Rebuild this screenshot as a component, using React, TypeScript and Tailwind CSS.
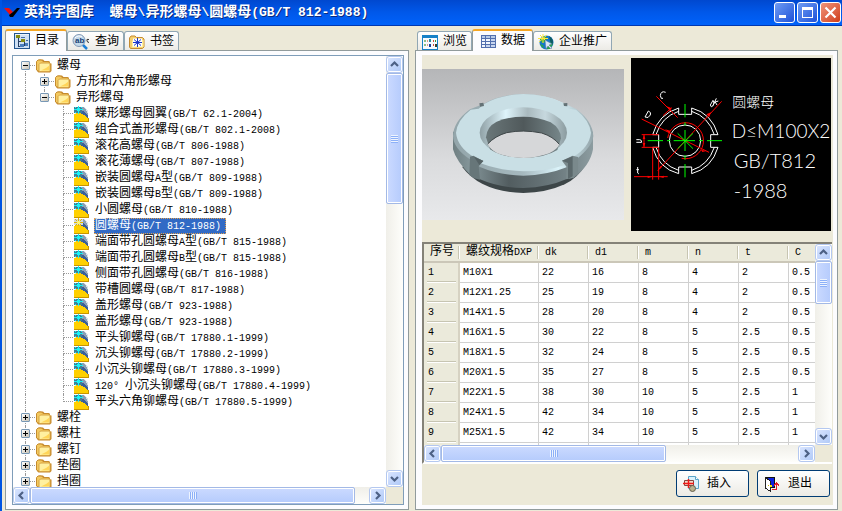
import React from 'react';

type TreeNode = {
  label: string;
  level: number;
  expanded?: boolean;
  first?: boolean;
  last?: boolean;
  selected?: boolean;
};

const standards = [
  '蝶形螺母圆翼(GB/T 62.1-2004)',
  '组合式盖形螺母(GB/T 802.1-2008)',
  '滚花高螺母(GB/T 806-1988)',
  '滚花薄螺母(GB/T 807-1988)',
  '嵌装圆螺母A型(GB/T 809-1988)',
  '嵌装圆螺母B型(GB/T 809-1988)',
  '小圆螺母(GB/T 810-1988)',
  '圆螺母(GB/T 812-1988)',
  '端面带孔圆螺母A型(GB/T 815-1988)',
  '端面带孔圆螺母B型(GB/T 815-1988)',
  '侧面带孔圆螺母(GB/T 816-1988)',
  '带槽圆螺母(GB/T 817-1988)',
  '盖形螺母(GB/T 923-1988)',
  '盖形螺母(GB/T 923-1988)',
  '平头铆螺母(GB/T 17880.1-1999)',
  '沉头铆螺母(GB/T 17880.2-1999)',
  '小沉头铆螺母(GB/T 17880.3-1999)',
  '120° 小沉头铆螺母(GB/T 17880.4-1999)',
  '平头六角铆螺母(GB/T 17880.5-1999)',
];

const nodes: TreeNode[] = [
  { label: '螺母', level: 0, expanded: true, first: true },
  { label: '方形和六角形螺母', level: 1, expanded: false },
  { label: '异形螺母', level: 1, expanded: true, last: true },
  ...standards.map((label, i) => ({
    label,
    level: 2,
    last: i === standards.length - 1,
    selected: i === 7,
  })),
  { label: '螺栓', level: 0, expanded: false },
  { label: '螺柱', level: 0, expanded: false },
  { label: '螺钉', level: 0, expanded: false },
  { label: '垫圈', level: 0, expanded: false },
  { label: '挡圈', level: 0, expanded: false },
];

const columns = ['序号', '螺纹规格DXP', 'dk', 'd1', 'm', 'n', 't', 'C'];

const rows = [
  ['1', 'M10X1', '22', '16', '8', '4', '2', '0.5'],
  ['2', 'M12X1.25', '25', '19', '8', '4', '2', '0.5'],
  ['3', 'M14X1.5', '28', '20', '8', '4', '2', '0.5'],
  ['4', 'M16X1.5', '30', '22', '8', '5', '2.5', '0.5'],
  ['5', 'M18X1.5', '32', '24', '8', '5', '2.5', '0.5'],
  ['6', 'M20X1.5', '35', '27', '8', '5', '2.5', '0.5'],
  ['7', 'M22X1.5', '38', '30', '10', '5', '2.5', '1'],
  ['8', 'M24X1.5', '42', '34', '10', '5', '2.5', '1'],
  ['9', 'M25X1.5', '42', '34', '10', '5', '2.5', '1'],
];

// Latin runs are set smaller so that they take half the width of a Chinese character
const Mixed: React.FC<{ text: string; latin?: string }> = ({ text, latin = 'text-[10px]' }) => (
  <>
    {text.split(/([\x20-\x7e°]+)/).map((part, i) =>
      i % 2 ? (
        <span key={i} className={latin}>
          {part}
        </span>
      ) : (
        part
      )
    )}
  </>
);

const FolderIcon = () => (
  <svg viewBox="0 0 16 14" className="w-4 h-[14px] shrink-0">
    <path d="M1.5 3V2L3 .5h4L8.500 2H13l1 1v1.500h1.500V12L14 13.500H2.500L1 12z" fill="#c98a2b" />
    <path d="M.5 11V2.500L2 1h3.500L7 2.500h5.500L13.500 4v8H2z" fill="#f3c95f" stroke="#c58b2f" />
    <path d="M3 12V5.500L4.500 4H14v7.500L13 12.500H3z" fill="#fff0a0" stroke="#d5a244" />
    <path d="M5 11.500h8l.5-5L10 9z" fill="#ffd558" />
  </svg>
);

const PartIcon: React.FC<{ active?: boolean }> = ({ active }) => (
  <svg viewBox="0 0 15 16" className="w-[15px] h-4 mr-px shrink-0" shapeRendering="crispEdges">
    <path d="M1 1h9l4 4v10H1z" fill="#dbe3ea" />
    <path d="M5 1h4l3 3 2 4v4L5 6z" fill="#8b9fb5" />
    <path d="M5 4l5 1 4 5v3L4 8z" fill="#3a5f9a" />
    <path d="M0 8l3-1h3l4 2 4 4v2H0z" fill="#ffd000" />
    <path d="M0 15h15v1H0zM14 12h1v3h-1z" fill="#c99500" />
    {active ? (
      <>
        <path d="M0 1h9v6H0z" fill="#cfd8e2" />
        <path d="M4 0h1v3H4zM4 5h1v3H4zM0 4h3v1H0zM6 4h3v1H6zM1 1h1v1H1zM2 2h1v1H2zM7 1h1v1H7zM6 2h1v1H6zM1 7h1v1H1zM2 6h1v1H2zM6 6h1v1H6z" fill="#e0b800" />
        <path d="M3 3h3v3H3z" fill="#fff36b" />
      </>
    ) : (
      <>
        <path d="M0 1h8v6H0z" fill="#3f7f98" />
        <path d="M4 0h1v8H4zM0 3h9v1H0zM3 2h3v3H3zM1 1h1v1H1zM7 1h1v1H7zM1 6h1v1H1z" fill="#18f3f5" />
      </>
    )}
  </svg>
);

const Guide: React.FC<{ up?: boolean; down?: boolean; branch?: boolean; expanded?: boolean }> = ({
  up,
  down,
  branch,
  expanded,
}) => (
  <span className="relative w-[19px] h-4 pl-[9px] shrink-0">
    <span
      className={`block h-2 border-dotted border-[#9a9a9a] ${up ? 'border-l' : ''} ${branch ? 'border-b' : ''}`}
    />
    <span className={`block h-2 border-dotted border-[#9a9a9a] ${down ? 'border-l' : ''}`} />
    {expanded !== undefined && (
      <button
        aria-label={expanded ? '折叠' : '展开'}
        className="absolute left-[5px] top-[3px] w-[9px] h-[9px] rounded-[1px] border border-[#7898b5] bg-linear-to-br from-white to-[#c9c3b4]"
      >
        <svg viewBox="0 0 7 7" className="block w-[7px] h-[7px]" shapeRendering="crispEdges">
          <path d={expanded ? 'M1 3h5v1H1z' : 'M1 3h5v1H1zM3 1h1v5H3z'} fill="#000" />
        </svg>
      </button>
    )}
  </span>
);

const TreeRow: React.FC<{ node: TreeNode }> = ({ node }) => (
  <li className="flex h-4 items-center whitespace-nowrap pl-[3px]">
    {node.level === 0 && <Guide up={!node.first} down branch expanded={node.expanded} />}
    {node.level > 0 && <Guide up down />}
    {node.level === 1 && <Guide up down={!node.last} branch expanded={node.expanded} />}
    {node.level === 2 && (
      <>
        <Guide />
        <Guide up down={!node.last} branch />
      </>
    )}
    <span className="flex items-center gap-1 pl-px">
      {node.level === 2 ? <PartIcon active={node.selected} /> : <FolderIcon />}
      <span
        className={
          node.selected
            ? 'h-4 leading-[14px] border border-dotted border-[#e0a050] bg-[#316ac5] text-white pr-1'
            : 'h-4 leading-4 pl-px'
        }
      >
        <Mixed text={node.label} />
      </span>
    </span>
  </li>
);

const arrows = {
  up: 'M1 6l3.500-3.500L8 6',
  down: 'M1 3l3.500 3.500L8 3',
  left: 'M6 1L2.500 4.500 6 8',
  right: 'M3 1l3.500 3.500L3 8',
};

const ArrowButton: React.FC<{ dir: keyof typeof arrows; label: string }> = ({ dir, label }) => (
  <button
    aria-label={label}
    className="w-[17px] h-[17px] shrink-0 flex items-center justify-center rounded-[3px] border border-[#b4c8f0] bg-linear-to-br from-[#dbe6ff] to-[#aec8f7] shadow-[inset_0_0_0_1px_#ffffff]"
  >
    <svg viewBox="0 0 9 9" className="w-[9px] h-[9px]">
      <path d={arrows[dir]} fill="none" stroke="#4d6185" strokeWidth="2.200" />
    </svg>
  </button>
);

const ScrollBar: React.FC<{ vertical?: boolean; size: number }> = ({ vertical, size }) =>
  vertical ? (
    <div className="flex flex-col w-[17px] min-h-0 bg-linear-to-r from-[#f0efe9] to-[#fefefb]">
      <ArrowButton dir="up" label="向上滚动" />
      <div className="flex-1 min-h-0">
        <div
          style={{ height: `${size}%` }}
          className="flex flex-col items-center justify-center gap-px rounded-[2px] border border-[#a3b9e6] bg-linear-to-r from-[#cbdaff] to-[#b5cbfc] shadow-[inset_0_0_0_1px_#ffffff]"
        >
          {[0, 1, 2, 3].map((i) => (
            <i key={i} className="w-[7px] h-px bg-[#eef4fe] shadow-[0_1px_0_#8cb0f8]" />
          ))}
        </div>
      </div>
      <ArrowButton dir="down" label="向下滚动" />
    </div>
  ) : (
    <div className="flex h-[17px] min-w-0 bg-linear-to-b from-[#f0efe9] to-[#fefefb]">
      <ArrowButton dir="left" label="向左滚动" />
      <div className="flex-1 min-w-0 flex">
        <div
          style={{ width: `${size}%` }}
          className="flex items-center justify-center gap-px rounded-[2px] border border-[#a3b9e6] bg-linear-to-b from-[#cbdaff] to-[#b5cbfc] shadow-[inset_0_0_0_1px_#ffffff]"
        >
          {[0, 1, 2, 3].map((i) => (
            <i key={i} className="h-[7px] w-px bg-[#eef4fe] shadow-[1px_0_0_#8cb0f8]" />
          ))}
        </div>
      </div>
      <ArrowButton dir="right" label="向右滚动" />
    </div>
  );

const Tab: React.FC<{ active?: boolean; icon: React.ReactNode; label: string }> = ({ active, icon, label }) => (
  <button
    role="tab"
    aria-selected={!!active}
    className={
      active
        ? 'relative -mb-px h-[22px] flex items-center gap-[5px] pl-2 pr-[7px] rounded-t-[3px] border border-b-0 border-[#919b9c] border-t-2 border-t-[#f5a623] bg-[#fcfcfe] whitespace-nowrap'
        : 'h-[19px] flex items-center gap-[5px] pt-[2px] pl-1 pr-1 rounded-t-[3px] border border-b-0 border-[#91a7b4] bg-linear-to-b from-white to-[#ecebe6] whitespace-nowrap'
    }
  >
    {icon}
    {label}
  </button>
);

const CatalogIcon = () => (
  <svg viewBox="0 0 16 16" className="w-4 h-4" shapeRendering="crispEdges">
    <path d="M0 0h16v16H0z" fill="#24558e" />
    <path d="M1 1h14v14H1z" fill="#cfe0f4" />
    <path d="M1 1h14v1H1z" fill="#edf4fb" />
    <path d="M4 5v8h3M4 8h6v4h2" fill="none" stroke="#263f66" />
    <path d="M2 2h4v3H2zM7 6h4v3H7z" fill="#868c13" />
    <path d="M6 11h4v3H6zM11 10h3v3h-3z" fill="#4a7dbd" />
    <path d="M7 4h4v1H7zM12 7h2v1h-2z" fill="#456da6" />
  </svg>
);

const SearchIcon = () => (
  <svg viewBox="0 0 18 16" className="w-[18px] h-4">
    <path d="M10 10l5 5" stroke="#1b7fd8" strokeWidth="2.500" />
    <circle cx="7" cy="6.500" r="6" fill="#c4d9ea" stroke="#8199b5" />
    <path d="M3 4a5 5 0 0 1 7-1" stroke="#fff" fill="none" />
    <text x="3" y="9" fontSize="8" fontWeight="bold" fontFamily="Liberation Sans, sans-serif" fill="#173e73">
      ab
    </text>
    <path d="M17 5.500q-3-1-2 1.500t2 1" stroke="#333" fill="none" />
  </svg>
);

const BookmarkIcon = () => (
  <svg viewBox="0 0 16 14" className="w-4 h-[14px]">
    <path d="M.5 12V3L2 1h4l1.500 1.500h6L15 4v8l-1.500 1.500h-12z" fill="#f6cf6b" stroke="#c58b2f" />
    <path d="M3 12.500V6l1-1h10.500v7z" fill="#fff0a0" />
    <path d="M4 3.500h9v8H4z" fill="#fff" />
    <path d="M8.500 3v9M4 7.500h9M5 4.500l7 6M12 4.500l-7 6" stroke="#1a35c8" />
  </svg>
);

const BrowseIcon = () => (
  <svg viewBox="0 0 16 15" className="w-4 h-[15px]" shapeRendering="crispEdges">
    <path d="M0 0h16v15H0z" fill="#1581c8" />
    <path d="M1 3h14v11H1z" fill="#f7fbff" />
    <path d="M2 5h2v2H2zM2 9h2v2H2z" fill="#8bbf87" />
    <path d="M5 5h1v2H5zM5 9h1v2H5z" fill="#d99a87" />
    <path d="M7 4h2v3H7z" fill="#2a8a9a" />
    <path d="M7 9h2v3H7z" fill="#1d3f9a" />
    <path d="M11 5h1v2h-1zM11 9h1v2h-1z" fill="#d04a37" />
    <path d="M13 5h1v2h-1z" fill="#2f9a3c" />
    <path d="M13 9h2v3h-2z" fill="#3b3f2c" />
  </svg>
);

const DataIcon = () => (
  <svg viewBox="0 0 15 13" className="w-[15px] h-[13px]" shapeRendering="crispEdges">
    <path d="M0 0h15v13H0z" fill="#526fae" />
    <path d="M1 1h3v2H1zM5 1h4v2H5zM10 1h4v2h-4z" fill="#b7cbe7" />
    <path d="M1 4h3v2H1zM5 4h4v2H5zM1 7h3v2H1zM5 7h4v2H5zM1 10h3v2H1z" fill="#f2f7ff" />
    <path d="M10 4h4v2h-4zM10 7h4v2h-4zM5 10h4v2H5zM10 10h4v2h-4z" fill="#c7d5ee" />
  </svg>
);

const GlobeIcon = () => (
  <svg viewBox="0 0 16 16" className="w-4 h-4">
    <circle cx="8.500" cy="8.500" r="7" fill="#1676ca" />
    <path d="M2 5l4-3 3 2-2 4-3 1zM9 9l4-1 2 2-3 5H9zM2 10l3 1 1 3-2-1z" fill="#29a64a" />
    <path d="M11 2q6 4 3 9l-2-4z" fill="#0e5b62" />
    <path d="M5 0v9M0 4.500h10M2 1l7 7M9 1L1 8" stroke="#ffe83b" />
    <path d="M7 6l1 9 2-3 3 3 1-1-3-3 3-1z" fill="#dbe7f5" stroke="#5875a0" strokeWidth=".5" />
  </svg>
);

const InsertIcon = () => (
  <svg viewBox="0 0 16 16" className="w-4 h-4">
    <path d="M5.500.5h7l3 3v9h-10z" fill="#d9f1fc" stroke="#58a3c8" />
    <path d="M12.500.5v3h3" fill="#fff" stroke="#58a3c8" />
    <path d="M1.500 4.500h9v5h-9z" fill="#f3d9c7" stroke="#86453d" />
    <circle cx="9.500" cy="12.500" r="3" fill="#b9b18d" stroke="#655e4b" />
    <path d="M0 7.500h11M5.500 3v9" stroke="#f01818" strokeWidth="1.500" />
  </svg>
);

const ExitIcon = () => (
  <svg viewBox="0 0 16 16" className="w-4 h-4" shapeRendering="crispEdges">
    <path d="M1 1h10v11H1z" fill="#111" />
    <path d="M3 2h7v9H3z" fill="#0b20df" />
    <path d="M1 1l5 4v10l-5-3z" fill="#fff" stroke="#222" />
    <path d="M4 9h1v1H4z" fill="#ccb700" />
    <path d="M6 9h2v2H6z" fill="#ffe500" />
    <path d="M8 13.500h4.500V7M10 9.500L12.500 7 15 9.500" fill="none" stroke="#e11b2a" />
  </svg>
);

const PhotoView = () => (
  <svg viewBox="6 27 606 453" className="w-full" role="img" aria-label="圆螺母">
    <defs>
      <linearGradient id="sky" x2="0" y2="1">
        <stop offset="0" stopColor="#b5b6b8" />
        <stop offset=".6" stopColor="#dadbdd" />
        <stop offset="1" stopColor="#e8e9eb" />
      </linearGradient>
      <linearGradient id="side">
        <stop offset="0" stopColor="#6f7f82" />
        <stop offset=".12" stopColor="#849599" />
        <stop offset=".4" stopColor="#525d60" />
        <stop offset=".75" stopColor="#6d7b7f" />
        <stop offset="1" stopColor="#8c9ca0" />
      </linearGradient>
      <linearGradient id="chamfer">
        <stop offset="0" stopColor="#8fa0a5" />
        <stop offset=".3" stopColor="#def4fb" />
        <stop offset=".55" stopColor="#a9b9be" />
        <stop offset=".75" stopColor="#c6d8de" />
        <stop offset="1" stopColor="#8b9b9f" />
      </linearGradient>
      <linearGradient id="bore">
        <stop offset="0" stopColor="#6a7779" />
        <stop offset=".5" stopColor="#50595b" />
        <stop offset="1" stopColor="#768689" />
      </linearGradient>
      <linearGradient id="rim">
        <stop offset="0" stopColor="#93a5aa" />
        <stop offset=".5" stopColor="#a6b9bf" />
        <stop offset=".75" stopColor="#dbf3fa" />
        <stop offset="1" stopColor="#93a5aa" />
      </linearGradient>
    </defs>
    <path d="M6 27h606v453H6z" fill="url(#sky)" />
    <path d="M126 320Q150 352 188 372Q240 398 310 399Q380 398 434 373Q475 352 494 318z" fill="#3d4648" />
    <path
      d="M99 215V268Q108 304 156 350L180 358Q240 384 310 384Q385 382 438 358L460 354Q510 318 519 268V215z"
      fill="url(#side)"
    />
    <path
      d="M99 228Q100 185 150 148L190 132Q240 103 310 102Q380 103 430 129L470 148Q518 185 520 228Q518 260 466 300L440 322Q380 346 310 347Q235 345 180 321L150 298Q100 265 99 228z"
      fill="url(#rim)"
    />
    <path
      d="M108 218Q112 180 152 149L176 146L192 132Q240 104 310 102Q380 104 428 128L446 146L468 149Q508 180 513 218Q508 262 460 290L430 300L438 314Q380 333 310 334Q240 332 182 310L190 302L160 290Q112 260 108 218z"
      fill="#c9dfe5"
    />
    <path d="M178 130l12-2 2 10-12 2zM430 130l12-1v10l-10-1z" fill="#647276" />
    <path d="M150 290l10-3 30 16-14 16 4 40-18-4-14-10z" fill="#677679" />
    <path d="M162 290l28 13-12 12z" fill="#556265" />
    <path d="M426 302l32-15 16 4v52l-14 10-22 4 2-36z" fill="#7a898c" />
    <path d="M426 302l32-13v60l-14 8v-48z" fill="#5b686b" />
    <ellipse cx="310" cy="218" rx="131" ry="76" fill="url(#chamfer)" />
    <path d="M198 232Q200 200 230 185Q265 170 310 170Q355 170 392 187Q422 205 423 235L412 270Q375 293 310 294Q245 292 210 268z" fill="url(#bore)" />
    <path d="M203 252Q225 228 260 218Q310 208 365 219Q400 230 418 253Q412 268 388 280Q350 294 310 294Q265 293 232 280Q210 268 203 252z" fill="#d6d7d9" />
    <path d="M203 252Q225 228 260 218Q310 208 365 219Q400 230 418 253" fill="none" stroke="#3e4648" strokeWidth="3" />
  </svg>
);

const DrawingView = () => (
  <svg viewBox="18 9 600 519" className="w-full" role="img" aria-label="圆螺母 GB/T812-1988">
    <path d="M18 9h600v519H18z" fill="#000" />
    <g fill="none" stroke="#fff" strokeWidth="3">
      <circle cx="180" cy="257" r="47" />
      <path d="M161 159V178H200V159Q260 175 279 239H257V277H279Q260 340 200 356V336H161V356Q100 340 83 277H101V239H83Q100 178 161 159z" />
      <path d="M161 169Q110 185 93 239M200 169Q250 185 268 239M268 277Q250 330 200 346M161 346Q110 330 93 277" />
      <path d="M122 112q-14-6-16 10q2 12 8 8M60 186l10-18q10 4 6 12q-6 12-16 6M256 150l8-14q6 8 0 16t-8-2M264 152l10-22M268 142l12-4M270 140l6 10M34 262h16M34 254h10q6 0 6 8M38 336v18q2 4 4 0M34 344h8" />
    </g>
    <g fill="none" stroke="#f00" strokeWidth="3">
      <path d="M128 249A54 54 0 1 1 170 310" />
      <path d="M94 124L158 188M50 192L252 292M290 139L98 347" />
      <path d="M114 182L140 158M50 239H101M50 277H101M57 239V277M83 280V374M101 280V374M27 365H128" />
    </g>
    <path d="M120 223l16 4-3 8zM228 284l16 4-12 3zM244 178l14-6-5 14zM100 344l6-12 4 6zM126 154l8 14 6-8zM68 362l14 3-14 4zM116 362l-14 3 14 4zM53 252l4-12 4 12zM53 264l4 12 4-12z" fill="#f00" />
    <path
      d="M180 147V187M180 202V212M180 225V288M180 300V314M180 327V367M68 257H114M126 257H136M146 257H210M222 257H234M246 257H291M158 235L204 281M158 281L204 235"
      fill="none"
      stroke="#0f0"
      strokeWidth="3"
    />
    <g fill="#fff" fontWeight="300" fontFamily="Lato, 'Noto Sans CJK SC', sans-serif">
      <text x="322" y="157" fontSize="42">圆螺母</text>
      <text x="320" y="248" fontSize="57">D≤M100X2</text>
      <text x="326" y="338" fontSize="60">GB/T812</text>
      <text x="326" y="430" fontSize="60">-1988</text>
    </g>
  </svg>
);

const DataTable = () => (
  <div className="flex-1 min-h-0 mr-px border-t-2 border-l-2 border-t-[#848278] border-l-[#848278] border-b-2 border-b-white grid grid-cols-[1fr_17px] grid-rows-[1fr_17px]">
    <div className="overflow-hidden bg-white">
      <table className="table-fixed w-[415px] min-w-full border-separate border-spacing-0 font-normal">
        <colgroup>
          <col className="w-[36px]" />
          <col className="w-[79px]" />
          <col className="w-[50px]" />
          <col className="w-[50px]" />
          <col className="w-[50px]" />
          <col className="w-[50px]" />
          <col className="w-[50px]" />
          <col className="w-[50px]" />
        </colgroup>
        <thead className="bg-[#ebeadb]">
          <tr>
            {columns.map((c) => (
              <th
                key={c}
                scope="col"
                className="h-[19px] text-left font-normal whitespace-nowrap p-0 pl-[6px] border-b-2 border-[#cbc7b8] leading-[17px]"
              >
                <span className="flex h-[17px] justify-between items-center">
                  <span>
                    <Mixed text={c} />
                  </span>
                  <i className="w-[2px] h-[13px] bg-[#c7c5b2] border-r border-white" />
                </span>
              </th>
            ))}
          </tr>
        </thead>
        <tbody>
          {rows.map((r) => (
            <tr key={r[0]} className="h-[20px]">
              {r.map((v, i) =>
                i === 0 ? (
                  <th
                    key={i}
                    scope="row"
                    className="bg-[#ebeadb] text-left font-normal p-0 pl-[3px] pr-[2px] border-r-2 border-[#d6d2c2] leading-[18px]"
                  >
                    <span className="block h-[20px] pl-px border-b border-white shadow-[inset_0_-1px_0_#c7c5b2]">
                      <Mixed text={v} />
                    </span>
                  </th>
                ) : (
                  <td key={i} className="p-0 pl-[3px] border-b border-r border-[#d0d0d0] leading-[18px]">
                    <Mixed text={v} />
                  </td>
                )
              )}
            </tr>
          ))}
          <tr className="h-[20px]">
            {columns.map((c, i) => (
              <td
                key={c}
                className={i ? 'p-0 border-r border-[#d0d0d0]' : 'p-0 bg-[#ebeadb] border-r-2 border-[#d6d2c2]'}
              />
            ))}
          </tr>
        </tbody>
      </table>
    </div>
    <ScrollBar vertical size={26} />
    <ScrollBar size={63} />
    <div className="bg-[#ece9d8]" />
  </div>
);

const ActionButton: React.FC<{ icon: React.ReactNode; label: string }> = ({ icon, label }) => (
  <button className="w-[73px] h-[27px] flex items-center gap-2 pl-[6px] rounded-[3px] border border-[#003c74] bg-linear-to-b from-white to-[#ecebe5]">
    {icon}
    {label}
  </button>
);

const captionButton =
  'w-[21px] h-[21px] flex items-center justify-center rounded-[3px] border border-white';

const App: React.FC = () => {
  return (
    <div className="h-screen flex flex-col overflow-hidden bg-[#ece9d8] border-l-2 border-[#0054e3] text-black text-xs font-['Liberation_Mono','Noto_Sans_CJK_SC',monospace]">
      <header className="h-[26px] shrink-0 flex items-center pl-[2px] pr-px bg-linear-to-b from-[#0048cf] via-[#0058ea] to-[#0062fa] border-b border-[#0038b0]">
        <svg viewBox="0 0 16 12" className="w-4 h-3 shrink-0">
          <path d="M0 1h5l4 4-3 3z" fill="#f01010" />
          <path d="M5 8l4-3 4-4h3L9 10H6z" fill="#000" />
        </svg>
        <h1 className="flex-1 pl-1 text-sm leading-5 font-bold text-white whitespace-pre [text-shadow:1px_1px_0_#0a2a80]">
          <Mixed text={'英科宇图库  螺母\\异形螺母\\圆螺母(GB/T 812-1988)'} latin="text-[13px]" />
        </h1>
        <div className="flex gap-[2px]">
          <button aria-label="最小化" className={`${captionButton} bg-linear-to-br from-[#6f9bf3] to-[#1f50d8]`}>
            <svg viewBox="0 0 19 19" className="w-[19px] h-[19px]" shapeRendering="crispEdges">
              <path d="M4 12h7v3H4z" fill="#fff" />
            </svg>
          </button>
          <button aria-label="最大化" className={`${captionButton} bg-linear-to-br from-[#6f9bf3] to-[#1f50d8]`}>
            <svg viewBox="0 0 19 19" className="w-[19px] h-[19px]" shapeRendering="crispEdges">
              <path d="M4 4h11v11H4zM5 7v7h9V7z" fill="#fff" fillRule="evenodd" />
            </svg>
          </button>
          <button aria-label="关闭" className={`${captionButton} bg-linear-to-br from-[#f0947a] to-[#cf3a12]`}>
            <svg viewBox="0 0 19 19" className="w-[19px] h-[19px]">
              <path d="M4.500 4.500l10 10M14.500 4.500l-10 10" stroke="#fff" strokeWidth="2.200" />
            </svg>
          </button>
        </div>
      </header>

      <main className="flex-1 min-h-0 grid grid-cols-[404fr_423fr] gap-[6px] pl-[3px] pr-1 pt-[3px] pb-px">
        <section className="flex flex-col min-w-0 min-h-0">
          <div role="tablist" className="flex items-end h-[21px] shrink-0">
            <Tab active icon={<CatalogIcon />} label="目录" />
            <Tab icon={<SearchIcon />} label="查询" />
            <Tab icon={<BookmarkIcon />} label="书签" />
          </div>
          <div className="flex-1 min-h-0 flex flex-col border border-[#919b9c] bg-[#fcfcfe] pl-[6px] pr-1 pt-1 pb-1">
            <div className="flex-1 min-h-0 border border-[#7f9db9] bg-white grid grid-cols-[1fr_17px] grid-rows-[1fr_17px]">
              <ul className="overflow-hidden pt-[2px]">
                {nodes.map((n, i) => (
                  <TreeRow key={i} node={n} />
                ))}
              </ul>
              <ScrollBar vertical size={33} />
              <ScrollBar size={96} />
              <div className="bg-[#ece9d8]" />
            </div>
          </div>
        </section>

        <section className="flex flex-col min-w-0 min-h-0">
          <div role="tablist" className="flex items-end h-[21px] shrink-0 pl-[2px]">
            <Tab icon={<BrowseIcon />} label="浏览" />
            <Tab active icon={<DataIcon />} label="数据" />
            <Tab icon={<GlobeIcon />} label="企业推广" />
          </div>
          <div className="flex-1 min-h-0 flex flex-col border border-[#919b9c] bg-[#fcfcfe] pl-[6px] pr-1 pt-1 pb-1">
            <div className="flex-1 min-h-0 flex flex-col bg-[#ece9d8]">
              <div className="grid grid-cols-[202fr_200fr] items-center gap-[7px] pt-[3px] pr-[2px] pb-[11px]">
                <PhotoView />
                <DrawingView />
              </div>
              <DataTable />
              <div className="flex justify-end gap-2 pt-[6px] pb-2 pr-[3px] shrink-0">
                <ActionButton icon={<InsertIcon />} label="插入" />
                <ActionButton icon={<ExitIcon />} label="退出" />
              </div>
            </div>
          </div>
        </section>
      </main>
    </div>
  );
};

export default App;
